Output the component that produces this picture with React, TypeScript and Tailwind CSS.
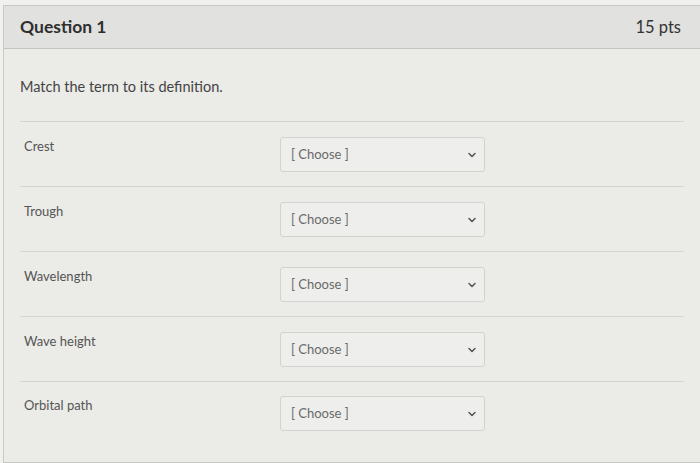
import { ChevronDown } from 'lucide-react';

const terms = ['Crest', 'Trough', 'Wavelength', 'Wave height', 'Orbital path'];

function ChooseSelect() {
    return (
        <div className="flex h-[35px] w-[205px] items-center justify-between rounded-[3px] border border-[#d2d2cf] bg-[#eeeeec] pl-[10px] pr-[6px]">
            <span className="text-[13px] text-[#6a6a6a]">[ Choose ]</span>
            <ChevronDown className="h-[12px] w-[12px] text-[#555]" strokeWidth={3} />
        </div>
    );
}

export default function App() {
    return (
        <div className="h-[463px] w-[700px] overflow-hidden bg-[#f0f0ee] pl-[3px] pt-[5px] font-['Lato','Open_Sans',sans-serif]">
            <div className="border border-r-0 border-[#c8c8c5] bg-[#ebebe8]">
                {/* Header */}
                <div className="flex h-[43px] items-center justify-between border-b border-[#c4c4c1] bg-[#e1e1df] pl-[16px] pr-[19px]">
                    <span className="text-[17.5px] font-bold text-[#2f2f2f]">Question 1</span>
                    <span className="text-[16.5px] text-[#333]">15 pts</span>
                </div>

                {/* Body */}
                <div className="px-[16px]">
                    <div className="border-b border-[#d3d3d0] pb-[24px] pt-[28px] text-[14.5px] leading-[20px] text-[#444]">
                        Match the term to its definition.
                    </div>
                    {terms.map((term, i) => (
                        <div
                            key={term}
                            className={
                                i < terms.length - 1
                                    ? 'flex h-[65px] items-start border-b border-[#d3d3d0] pl-[4px] pt-[15px]'
                                    : 'flex h-[80px] items-start pl-[4px] pt-[14px]'
                            }
                        >
                            <div className="w-[256px] text-[13px] leading-[18px] text-[#555]">{term}</div>
                            <ChooseSelect />
                        </div>
                    ))}
                </div>
            </div>
        </div>
    );
}
